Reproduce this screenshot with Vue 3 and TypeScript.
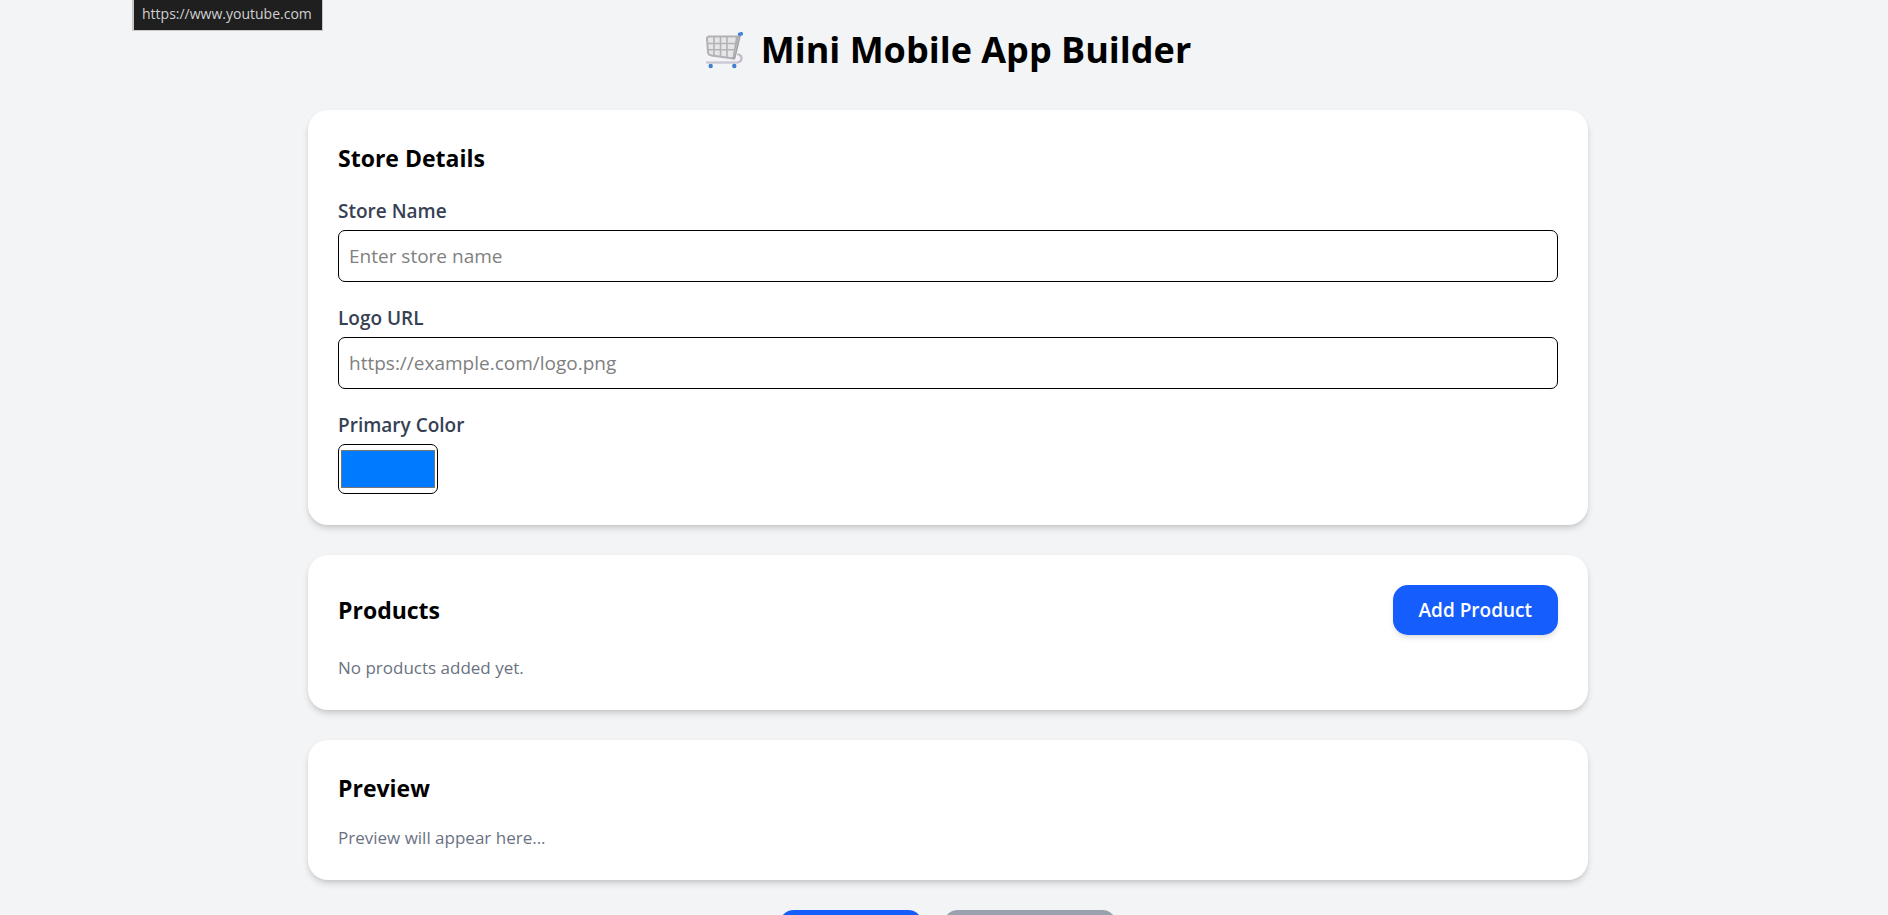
<script setup lang="ts">
import { ref } from 'vue'

const hoveredLink = ref('https://www.youtube.com')
const storeName = ref('')
const logoUrl = ref('')
const primaryColor = ref('#007bff')
</script>

<template>
  <div class="page">
    <div class="status">{{ hoveredLink }}</div>
    <main class="builder">
      <h1 class="title">
        <svg class="cart" viewBox="0 0 38 38" fill="none" aria-hidden="true">
          <path d="M2 31.5 H31 C38 31.5 38 24 33 23.5" stroke="#bdb6c6" stroke-width="2.2" stroke-linecap="round" />
          <path d="M2 31 H31 C36.5 31 36.5 25 33 24" stroke="#dcd7e4" stroke-width="1" stroke-linecap="round" />
          <path d="M32 5.5 H4.5 C2.5 5.5 1.8 6.5 2 8 L3 21 C3.2 23.5 4.4 24.4 6.5 24.6 L28.5 27.5 Z" fill="#e6e6e8" stroke="#b3b1b6" stroke-width="2" stroke-linejoin="round" />
          <path d="M2.5 12.5 H30.5 M3 18.8 H29 M9 6 V24.5 M15.5 6 V25.5 M22 6 V26" stroke="#b3b1b6" stroke-width="1.6" />
          <path d="M34.5 4 L29 27" stroke="#a5a2a9" stroke-width="3" stroke-linecap="round" />
          <path d="M34 4.5 L28.5 26.5" stroke="#bfbdc3" stroke-width="1" />
          <path d="M34.6 3.2 L36.4 2.8" stroke="#4585d2" stroke-width="3.6" stroke-linecap="round" />
          <circle cx="5.7" cy="35" r="2.2" fill="#3f7fce" />
          <circle cx="29.3" cy="35" r="2.2" fill="#3f7fce" />
        </svg>
        <span>Mini Mobile App Builder</span>
      </h1>

      <section class="card">
        <h2 class="heading">Store Details</h2>
        <form class="fields" @submit.prevent>
          <div class="field">
            <label for="store-name">Store Name</label>
            <input id="store-name" v-model="storeName" class="text-input" type="text" placeholder="Enter store name" />
          </div>
          <div class="field">
            <label for="logo-url">Logo URL</label>
            <input id="logo-url" v-model="logoUrl" class="text-input" type="text" placeholder="https://example.com/logo.png" />
          </div>
          <div class="field">
            <label for="primary-color">Primary Color</label>
            <input id="primary-color" v-model="primaryColor" class="color-input" type="color" />
          </div>
        </form>
      </section>

      <section class="card">
        <div class="card-header">
          <h2 class="heading">Products</h2>
          <button class="button" type="button">Add Product</button>
        </div>
        <p class="empty">No products added yet.</p>
      </section>

      <section class="card">
        <h2 class="heading">Preview</h2>
        <p class="empty">Preview will appear here...</p>
      </section>

      <div class="actions">
        <button class="button save" type="button" aria-label="Save"></button>
        <button class="button reset" type="button" aria-label="Reset"></button>
      </div>
    </main>
  </div>
</template>

<style>
html,
body {
  height: 100%;
  overflow: hidden;
  background: #f3f4f6;
}
</style>

<style scoped>
.page {
  box-sizing: border-box;
  height: 100vh;
  overflow: hidden;
  padding: 30px 20px 0 28px;
  background: #f3f4f6;
  color: #000;
  font-family: "Segoe UI", "Open Sans", "Noto Sans", sans-serif;
  font-size: 19px;
  line-height: 30px;
}

.page * {
  box-sizing: border-box;
}

.status {
  position: absolute;
  top: 0;
  left: 132px;
  padding: 0 10px 2px 8px;
  border: solid #c8c8c8;
  border-width: 0 1px 1px 2px;
  background: #1f1f1f;
  color: #d0d0d0;
  font-size: 14px;
  line-height: 28px;
}

.builder {
  display: flex;
  flex-direction: column;
  gap: 30px;
  max-width: 1280px;
  margin: 0 auto;
}

.title {
  display: flex;
  align-items: center;
  justify-content: center;
  gap: 18px;
  margin: 0 0 10px;
  font-size: 36px;
  font-weight: 700;
  line-height: 40px;
}

.cart {
  width: 38px;
  height: 38px;
}

.card {
  padding: 30px;
  border-radius: 20px;
  background: #fff;
  box-shadow: 0 4px 6px -1px rgba(0, 0, 0, 0.1), 0 2px 4px -2px rgba(0, 0, 0, 0.1), 0 4px 8px rgba(0, 0, 0, 0.06);
}

.heading {
  margin: 0 0 18px;
  font-size: 23px;
  font-weight: 700;
  line-height: 37px;
}

.fields {
  display: flex;
  flex-direction: column;
  gap: 20px;
  padding-bottom: 1px;
}

.field {
  display: flex;
  flex-direction: column;
  align-items: flex-start;
  gap: 3px;
}

.field label {
  color: #364153;
  font-weight: 600;
  line-height: 32px;
}

.text-input {
  width: 100%;
  height: 52px;
  padding: 0 10px;
  border: 1px solid #000;
  border-radius: 7px;
  background: #fff;
  color: #000;
  font: inherit;
}

.text-input::placeholder {
  color: #808080;
}

.color-input {
  width: 100px;
  height: 50px;
  padding: 1px 0;
  border: 1px solid #000;
  border-radius: 7px;
  background: #fff;
}

.card-header {
  display: flex;
  align-items: center;
  justify-content: space-between;
  margin-bottom: 20px;
}

.card-header .heading {
  margin: 0;
}

.button {
  height: 50px;
  padding: 0 26px;
  border: 0;
  border-radius: 15px;
  background: #155dfc;
  box-shadow: 0 4px 6px -1px rgba(0, 0, 0, 0.1), 0 2px 4px -2px rgba(0, 0, 0, 0.1);
  color: #fff;
  font: inherit;
  font-weight: 600;
  white-space: nowrap;
}

.empty {
  margin: 0;
  color: #6a7282;
  font-size: 17px;
  line-height: 25px;
}

.actions {
  display: flex;
  justify-content: center;
  gap: 20px;
}

.save {
  width: 144px;
}

.reset {
  width: 174px;
  background: #99a1af;
}
</style>
